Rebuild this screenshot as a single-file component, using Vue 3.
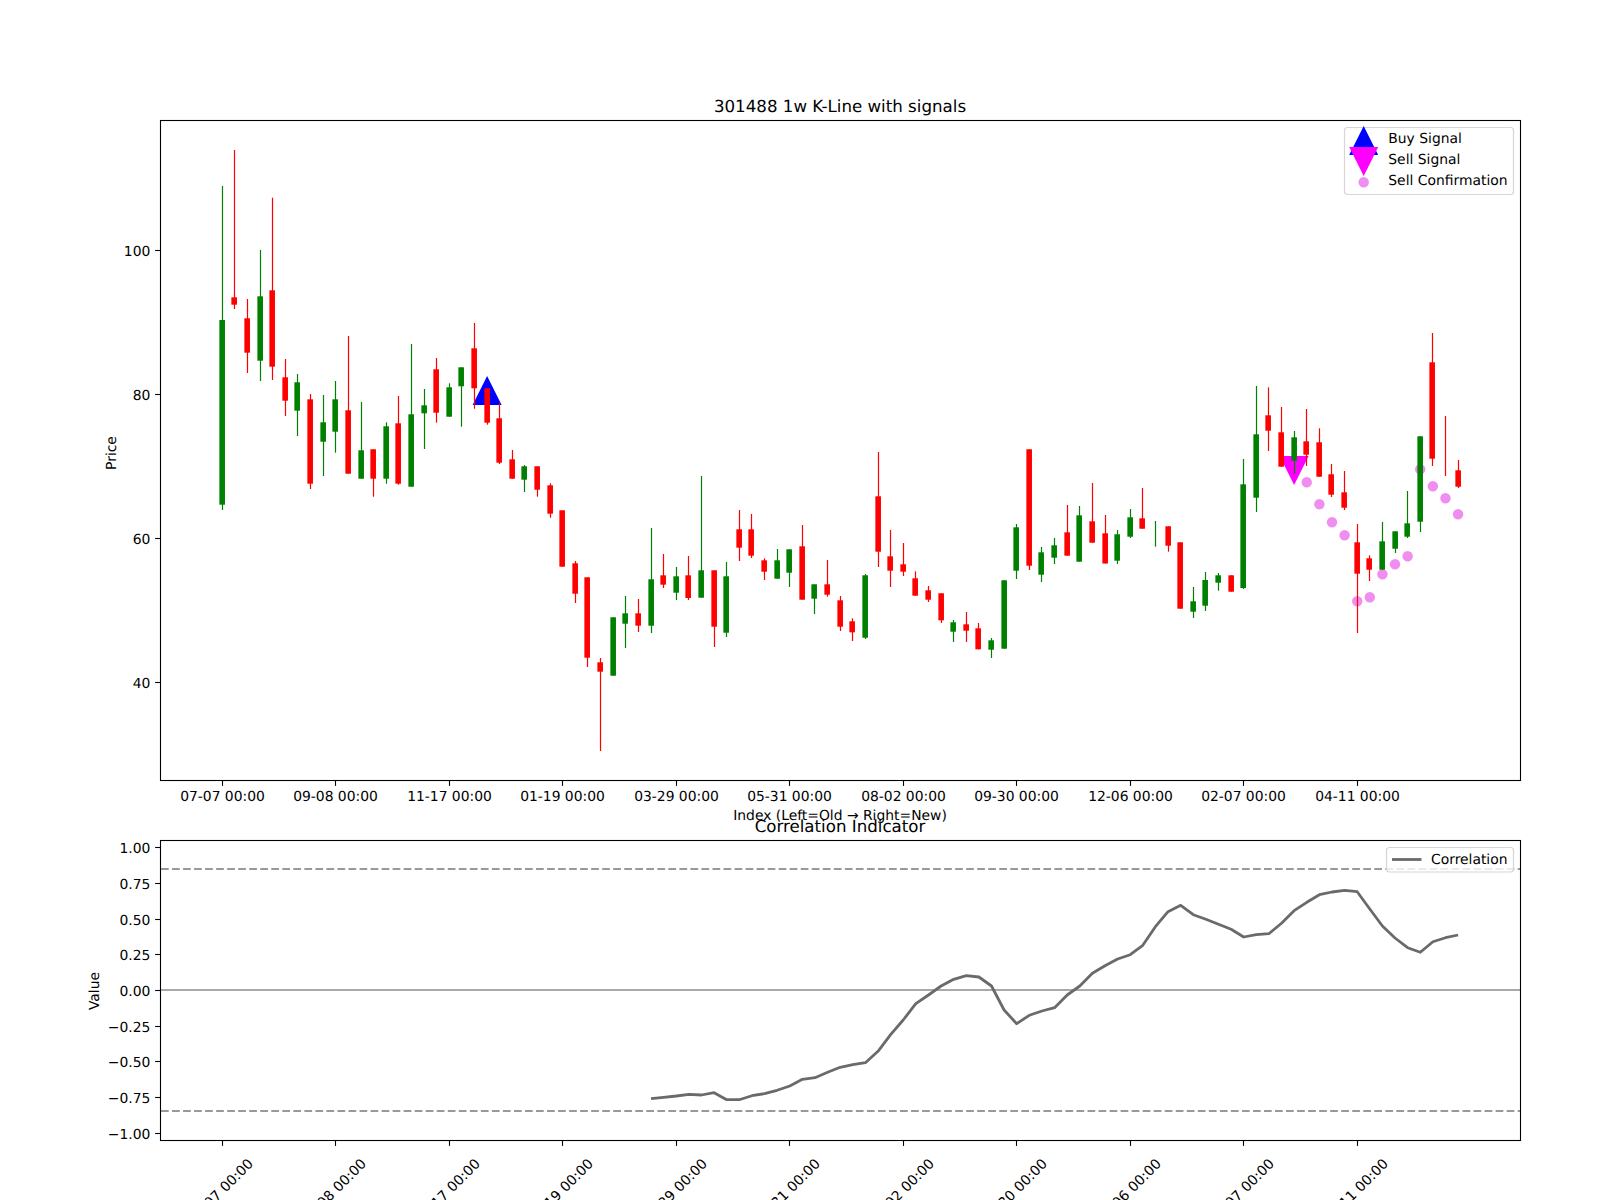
<script setup>
// All rows are read off the chart in pixels of the 1600x1200 figure
const slot = (i) => 222.3 + 12.61 * i;

// kind, wick top, body top, body bottom, wick bottom
const rows = [
  ["g", 186, 320, 504.7, 510], ["r", 150, 297.3, 304.7, 309], ["r", 299, 318.3, 352.7, 373],
  ["g", 250, 296.3, 360.7, 381], ["r", 197.7, 290.3, 366.7, 380], ["r", 359, 377.3, 400.7, 416],
  ["g", 374, 382.3, 410.7, 436], ["r", 394, 399.3, 483.7, 489], ["g", 395, 422.3, 441.7, 476],
  ["g", 381, 399.3, 431.7, 452.7], ["r", 336, 410.3, 473.7, 473.7], ["g", 402, 450.3, 478.7, 478.7],
  ["r", 449.3, 449.3, 478.7, 496.7], ["g", 422.3, 426.3, 478.7, 483.7], ["r", 396, 423.3, 483.7, 484.7],
  ["g", 344, 414.3, 486.7, 486.7], ["g", 389, 405.3, 413.3, 449], ["r", 358, 369.3, 412.7, 422.7],
  ["g", 383.3, 387.3, 416.7, 416.7], ["g", 367.3, 367.3, 386.3, 426.7], ["r", 323, 348.3, 388.3, 408.7],
  ["r", 388.3, 388.3, 422.7, 424.7], ["r", 403.3, 418.3, 462.7, 464], ["r", 450, 459.3, 478.7, 478.7],
  ["g", 465, 466.3, 479.7, 492], ["r", 466.3, 466.3, 489.7, 496.7], ["r", 483.3, 485.3, 513.7, 517.7],
  ["r", 510.3, 510.3, 566.7, 566.7], ["r", 561, 563.3, 593.7, 603], ["r", 577.3, 577.3, 657.7, 667],
  ["r", 658, 662.3, 671.7, 751], ["g", 617.3, 617.3, 675.7, 675.7], ["g", 596, 613.3, 623.7, 648],
  ["r", 599, 613.3, 625.7, 632], ["g", 528, 579.3, 625.7, 633], ["r", 554, 575.3, 584.7, 588],
  ["g", 567, 576.3, 592.7, 600], ["r", 556, 575.3, 598, 600], ["g", 476, 570.3, 597.7, 597.7],
  ["r", 570.3, 570.3, 626.7, 647], ["g", 562, 576.3, 632.7, 637], ["r", 510, 529.3, 547.7, 561],
  ["r", 514, 529.3, 555.7, 558], ["r", 558.3, 560.3, 571.7, 580], ["g", 549, 560.3, 578.7, 578.7],
  ["g", 549.3, 549.3, 572.7, 587], ["r", 525, 546.3, 599.7, 599.7], ["g", 584.3, 584.3, 598.7, 614],
  ["r", 560, 584.3, 594.7, 596.7], ["r", 596, 600.3, 626.7, 631], ["r", 618.3, 621.3, 632.3, 641],
  ["g", 574, 575.3, 637.7, 639], ["r", 452, 496.3, 551.7, 567], ["r", 530, 556.3, 570.7, 587],
  ["r", 543, 564.3, 571.7, 576], ["r", 571.3, 578.3, 595.7, 595.7], ["r", 586, 590.3, 599.7, 602],
  ["r", 593.3, 593.3, 620.3, 623], ["g", 620, 622.3, 631.7, 642], ["r", 612, 624.3, 630.7, 642],
  ["r", 623, 628.3, 649.3, 649.3], ["g", 638, 640.3, 649.7, 658], ["g", 580.3, 580.3, 648.7, 648.7],
  ["g", 524, 527.3, 570.7, 579], ["r", 449.3, 449.3, 565.7, 570], ["g", 547, 552.3, 574.7, 582],
  ["g", 538, 545.3, 557.7, 564], ["r", 505, 532.3, 555.7, 555.7], ["g", 506, 515.3, 561.7, 561.7],
  ["r", 483, 521.3, 542.7, 542.7], ["r", 515, 533.3, 563.5, 563.5], ["g", 530, 534.3, 560.7, 564],
  ["g", 509, 517.3, 536.7, 538], ["r", 488, 518.3, 528.7, 528.7], ["g", 521, 0, 0, 546.7],
  ["r", 526.3, 526.3, 545.7, 551.7], ["r", 542.3, 542.3, 608.7, 608.7], ["g", 587, 601.3, 611.7, 618],
  ["g", 572, 580, 605.7, 611], ["g", 573, 575.3, 582.7, 590.7], ["r", 575.3, 575.3, 591.7, 591.7],
  ["g", 459, 484.3, 588, 589], ["g", 386, 434.3, 497.7, 512], ["r", 387.3, 415.3, 430.7, 451],
  ["r", 407, 432.3, 466.7, 466.7], ["g", 431, 437.3, 460.7, 474], ["r", 409, 441.3, 454.7, 466],
  ["r", 428.3, 442.3, 476.7, 476.7], ["r", 464, 474.3, 494.7, 497], ["r", 471, 492.3, 507.7, 510],
  ["r", 524, 542.3, 573.7, 633], ["r", 555.3, 558.3, 569.7, 581], ["g", 522, 541.3, 569.7, 569.7],
  ["g", 531.3, 531.3, 548.7, 553], ["g", 491, 523.3, 536.7, 538], ["g", 436.3, 436.3, 521.7, 532],
  ["r", 333, 362.3, 458.7, 466], ["r", 416, 0, 0, 476], ["r", 460, 470.3, 486.7, 488],
];

const candles = rows.map(([kind, top, bodyTop, bodyBottom, bottom], i) => ({
  i,
  color: kind === "g" ? "#008000" : "#ff0000",
  wickX: Math.floor(slot(i)) + 0.5,
  bodyX: Math.floor(slot(i)) - 2.63,
  top,
  bottom,
  bodyTop,
  bodyHeight: bodyBottom - bodyTop,
}));

const confirmations = [
  482.3, 504.3, 522.3, 535.3, 601.3, 597.3, 574.3, 564.3, 556.3, 469.3, 486.3, 498.3, 514.3,
].map((y, n) => ({ x: slot(86 + n), y }));

// first value belongs to candle 34, the line has no data before that
const correlation = [
  1098.7, 1097.3, 1096, 1094.3, 1095, 1092.7, 1099.7, 1099.7, 1095.7, 1093.7, 1090.3, 1086, 1079.3,
  1077.7, 1072.3, 1067.3, 1064.7, 1062.7, 1051.3, 1034.7, 1020, 1003.7, 995, 986, 979.3, 975.7, 977,
  986, 1010, 1023.7, 1015.3, 1011, 1007.7, 995, 986, 973.3, 965.7, 959, 954.7, 945.3, 926.7, 911.7,
  905.3, 914.7, 919.3, 924.3, 929.3, 937, 934.7, 933.7, 923.3, 910.7, 902.3, 894.7, 892, 890.3,
  891.7, 909, 926, 938, 947.7, 952.3, 941.7, 937.7, 935,
];
const correlationPoints = correlation.map((y, n) => `${slot(34 + n).toFixed(1)},${y}`).join(" ");

const dateLabels = [
  "07-07 00:00", "09-08 00:00", "11-17 00:00", "01-19 00:00", "03-29 00:00", "05-31 00:00",
  "08-02 00:00", "09-30 00:00", "12-06 00:00", "02-07 00:00", "04-11 00:00",
];
const dateTicks = dateLabels.map((label, n) => ({
  label,
  x: Math.floor(slot(n * 9)) + 0.5,
}));

const priceTicks = [
  { label: "100", y: 250.5 },
  { label: "80", y: 394.5 },
  { label: "60", y: 538.5 },
  { label: "40", y: 682.5 },
];

const corrTicks = ["1.00", "0.75", "0.50", "0.25", "0.00", "−0.25", "−0.50", "−0.75", "−1.00"].map((label, n) => ({
  label,
  y: Math.round(990 - 142.86 * (1 - n * 0.25)) + 0.5,
}));

const triangle = (cx, top, h, up) => {
  const half = h / 2;
  return up
    ? `${cx},${top} ${cx + half},${top + h} ${cx - half},${top + h}`
    : `${cx - half},${top} ${cx + half},${top} ${cx},${top + h}`;
};
</script>

<template>
  <div class="page">
    <svg class="figure" width="1600" height="1200" viewBox="0 0 1600 1200">
      <!-- price panel -->
      <text class="title" x="840" y="111.7">301488 1w K-Line with signals</text>

      <polygon class="buy" :points="triangle(slot(21), 376, 29, true)" />
      <polygon class="sell" :points="triangle(slot(85), 456, 29, false)" />
      <circle v-for="dot in confirmations" :key="dot.x" class="confirm" :cx="dot.x" :cy="dot.y" r="5.2" />

      <g v-for="c in candles" :key="c.i">
        <line class="wick" :x1="c.wickX" :x2="c.wickX" :y1="c.top" :y2="c.bottom" :stroke="c.color" />
        <rect v-if="c.bodyHeight" :x="c.bodyX" :y="c.bodyTop" width="5.6" :height="c.bodyHeight" :fill="c.color" />
      </g>

      <rect class="spine" x="160.5" y="120.5" width="1360" height="660" />
      <g v-for="t in priceTicks" :key="t.label">
        <line class="tick" x1="155.1" x2="160" :y1="t.y" :y2="t.y" />
        <text class="label end" x="150.3" :y="t.y + 5">{{ t.label }}</text>
      </g>
      <g v-for="t in dateTicks" :key="t.label">
        <line class="tick" :x1="t.x" :x2="t.x" y1="781" y2="785.9" />
        <text class="label" :x="t.x" y="800.7">{{ t.label }}</text>
      </g>
      <text class="label" transform="rotate(-90 115.5 453)" x="115.5" y="453">Price</text>
      <text class="label" x="840" y="820">Index (Left=Old → Right=New)</text>

      <rect class="legend-box" x="1344.5" y="127.5" width="169" height="67" rx="3" />
      <polygon class="buy" :points="triangle(1363.7, 126, 29, true)" />
      <polygon class="sell" :points="triangle(1363.7, 147, 29, false)" />
      <circle class="confirm" cx="1363.7" cy="182.3" r="5.2" />
      <text class="label start" x="1388.3" y="143.3">Buy Signal</text>
      <text class="label start" x="1388.3" y="164.3">Sell Signal</text>
      <text class="label start" x="1388.3" y="185.3">Sell Confirmation</text>

      <!-- correlation panel -->
      <text class="title" x="840" y="831.7">Correlation Indicator</text>

      <line class="limit" x1="161" x2="1520" y1="869" y2="869" />
      <line class="limit" x1="161" x2="1520" y1="1111" y2="1111" />
      <line class="zero" x1="161" x2="1520" y1="990" y2="990" />
      <polyline class="corr" :points="correlationPoints" />

      <rect class="spine" x="160.5" y="840.5" width="1360" height="300" />
      <g v-for="t in corrTicks" :key="t.label">
        <line class="tick" x1="155.1" x2="160" :y1="t.y" :y2="t.y" />
        <text class="label end" x="150.3" :y="t.y + 5">{{ t.label }}</text>
      </g>
      <g v-for="t in dateTicks" :key="t.label">
        <line class="tick" :x1="t.x" :x2="t.x" y1="1141" y2="1145.9" />
        <text class="label" :transform="`rotate(-45 ${t.x - 2} 1191)`" :x="t.x - 2" y="1196">{{ t.label }}</text>
      </g>
      <text class="label" transform="rotate(-90 98.5 991)" x="98.5" y="991">Value</text>

      <rect class="legend-box" x="1386.5" y="847.5" width="127" height="24.5" rx="3" />
      <line class="corr" x1="1392" x2="1421.5" y1="859.5" y2="859.5" />
      <text class="label start" x="1431" y="864">Correlation</text>
    </svg>
  </div>
</template>

<style scoped>
.page {
  width: 1600px;
  height: 1200px;
  background: #fff;
  overflow: hidden;
}

.figure {
  display: block;
  font-family: "DejaVu Sans", sans-serif;
  text-rendering: geometricPrecision;
}

.title {
  font-size: 16.67px;
  text-anchor: middle;
  fill: #000;
}

.label {
  font-size: 13.89px;
  text-anchor: middle;
  fill: #000;
}

.end {
  text-anchor: end;
}

.start {
  text-anchor: start;
}

.spine {
  fill: none;
  stroke: #000;
  stroke-width: 1.1;
}

.tick {
  stroke: #000;
  stroke-width: 1.1;
}

.wick {
  stroke-width: 1.2;
}

.buy {
  fill: #0000ff;
}

.sell {
  fill: #ff00ff;
}

.confirm {
  fill: #ee82ee;
  opacity: 0.9;
}

.legend-box {
  fill: rgba(255, 255, 255, 0.8);
  stroke: #d6d6d6;
  stroke-width: 1.2;
}

.limit {
  stroke: #999;
  stroke-width: 2;
  stroke-dasharray: 7.7 3.33;
}

.zero {
  stroke: #aaa;
  stroke-width: 2;
}

.corr {
  fill: none;
  stroke: #6a6a6a;
  stroke-width: 2.78;
  stroke-linejoin: round;
}
</style>
